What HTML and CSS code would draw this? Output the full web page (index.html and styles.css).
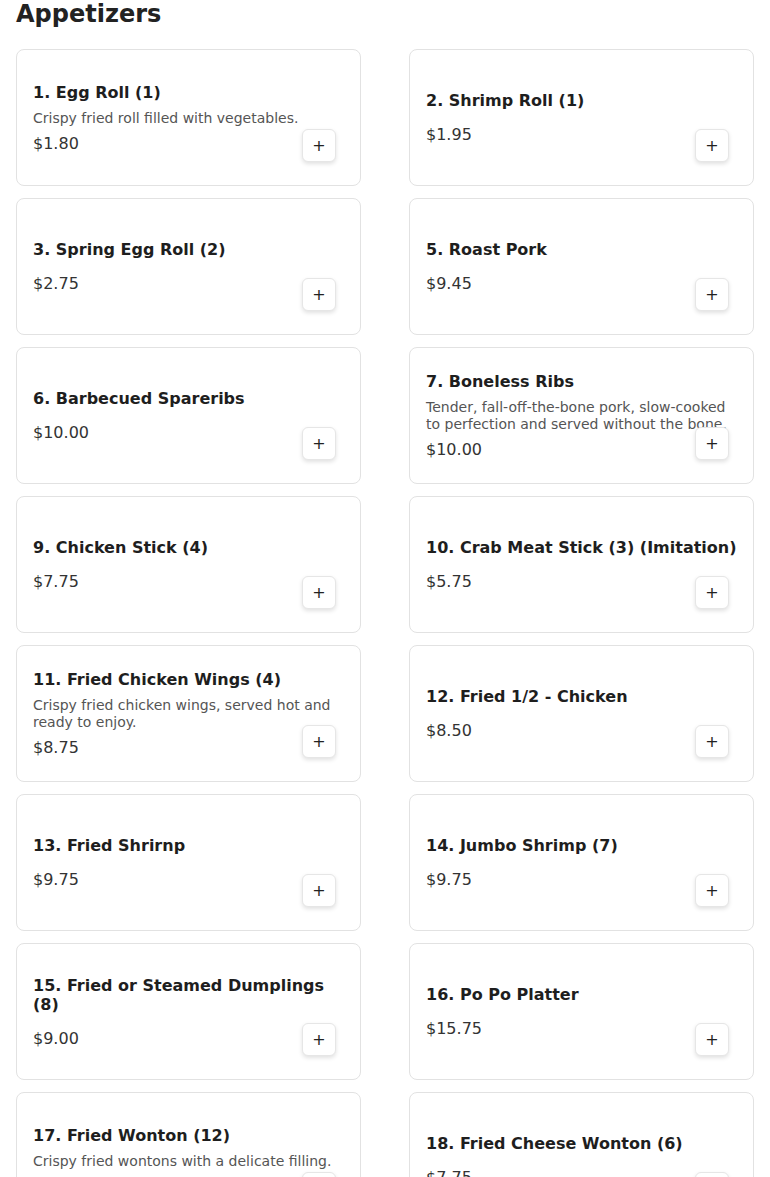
FILE: index.html
```html
<!DOCTYPE html>
<html>
<head>
<meta charset="utf-8">
<link rel="stylesheet" href="styles.css">
</head>
<body>
<section class="menu">
  <h2 class="section-title">Appetizers</h2>
  <div class="grid">
    <div class="card"><div class="name">1. Egg Roll (1)</div><div class="desc">Crispy fried roll filled with vegetables.</div><div class="price">$1.80</div><button class="add">+</button></div>
    <div class="card"><div class="name">2. Shrimp Roll (1)</div><div class="price">$1.95</div><button class="add">+</button></div>
    <div class="card"><div class="name">3. Spring Egg Roll (2)</div><div class="price">$2.75</div><button class="add">+</button></div>
    <div class="card"><div class="name">5. Roast Pork</div><div class="price">$9.45</div><button class="add">+</button></div>
    <div class="card"><div class="name">6. Barbecued Spareribs</div><div class="price">$10.00</div><button class="add">+</button></div>
    <div class="card"><div class="name">7. Boneless Ribs</div><div class="desc">Tender, fall-off-the-bone pork, slow-cooked to perfection and served without the bone.</div><div class="price">$10.00</div><button class="add">+</button></div>
    <div class="card"><div class="name">9. Chicken Stick (4)</div><div class="price">$7.75</div><button class="add">+</button></div>
    <div class="card"><div class="name">10. Crab Meat Stick (3) (Imitation)</div><div class="price">$5.75</div><button class="add">+</button></div>
    <div class="card"><div class="name">11. Fried Chicken Wings (4)</div><div class="desc">Crispy fried chicken wings, served hot and ready to enjoy.</div><div class="price">$8.75</div><button class="add">+</button></div>
    <div class="card"><div class="name">12. Fried 1/2 - Chicken</div><div class="price">$8.50</div><button class="add">+</button></div>
    <div class="card"><div class="name">13. Fried Shrirnp</div><div class="price">$9.75</div><button class="add">+</button></div>
    <div class="card"><div class="name">14. Jumbo Shrimp (7)</div><div class="price">$9.75</div><button class="add">+</button></div>
    <div class="card"><div class="name">15. Fried or Steamed Dumplings (8)</div><div class="price">$9.00</div><button class="add">+</button></div>
    <div class="card"><div class="name">16. Po Po Platter</div><div class="price">$15.75</div><button class="add">+</button></div>
    <div class="card"><div class="name">17. Fried Wonton (12)</div><div class="desc">Crispy fried wontons with a delicate filling.</div><div class="price">$7.25</div><button class="add">+</button></div>
    <div class="card"><div class="name">18. Fried Cheese Wonton (6)</div><div class="price">$7.75</div><button class="add">+</button></div>
  </div>
</section>
</body>
</html>
```

FILE: styles.css
```css
html, body {
  margin: 0;
  padding: 0;
  background: #ffffff;
}
body {
  font-family: "DejaVu Sans", Verdana, sans-serif;
  color: #222222;
}
.menu {
  padding: 0 16px 16px 16px;
}
.section-title {
  margin: 0 0 21px 0;
  font-size: 24px;
  font-weight: bold;
  line-height: 28px;
  color: #222222;
}
.grid {
  display: grid;
  grid-template-columns: 345px 345px;
  column-gap: 48px;
  row-gap: 12px;
}
.card {
  position: relative;
  box-sizing: border-box;
  height: 137px;
  border: 1px solid #e2e2e2;
  border-radius: 8px;
  padding: 0 16px;
  display: flex;
  flex-direction: column;
  justify-content: center;
  background: #ffffff;
}
.name {
  font-size: 16px;
  font-weight: bold;
  line-height: 19px;
  color: #1e1e1e;
  margin-bottom: 8px;
}
.desc {
  font-size: 14px;
  line-height: 17px;
  color: #555555;
}
.price {
  font-size: 16px;
  line-height: 19px;
  color: #333333;
  margin-top: 7px;
}
.add {
  position: absolute;
  right: 24px;
  bottom: 23px;
  width: 34px;
  height: 33px;
  box-sizing: border-box;
  border: 1px solid #e6e6e6;
  border-radius: 6px;
  background: #ffffff;
  box-shadow: 0 2px 4px rgba(0, 0, 0, 0.12);
  font-family: "DejaVu Sans", sans-serif;
  font-size: 16px;
  line-height: 1;
  color: #222222;
  padding: 0;
  display: flex;
  align-items: center;
  justify-content: center;
}
```
